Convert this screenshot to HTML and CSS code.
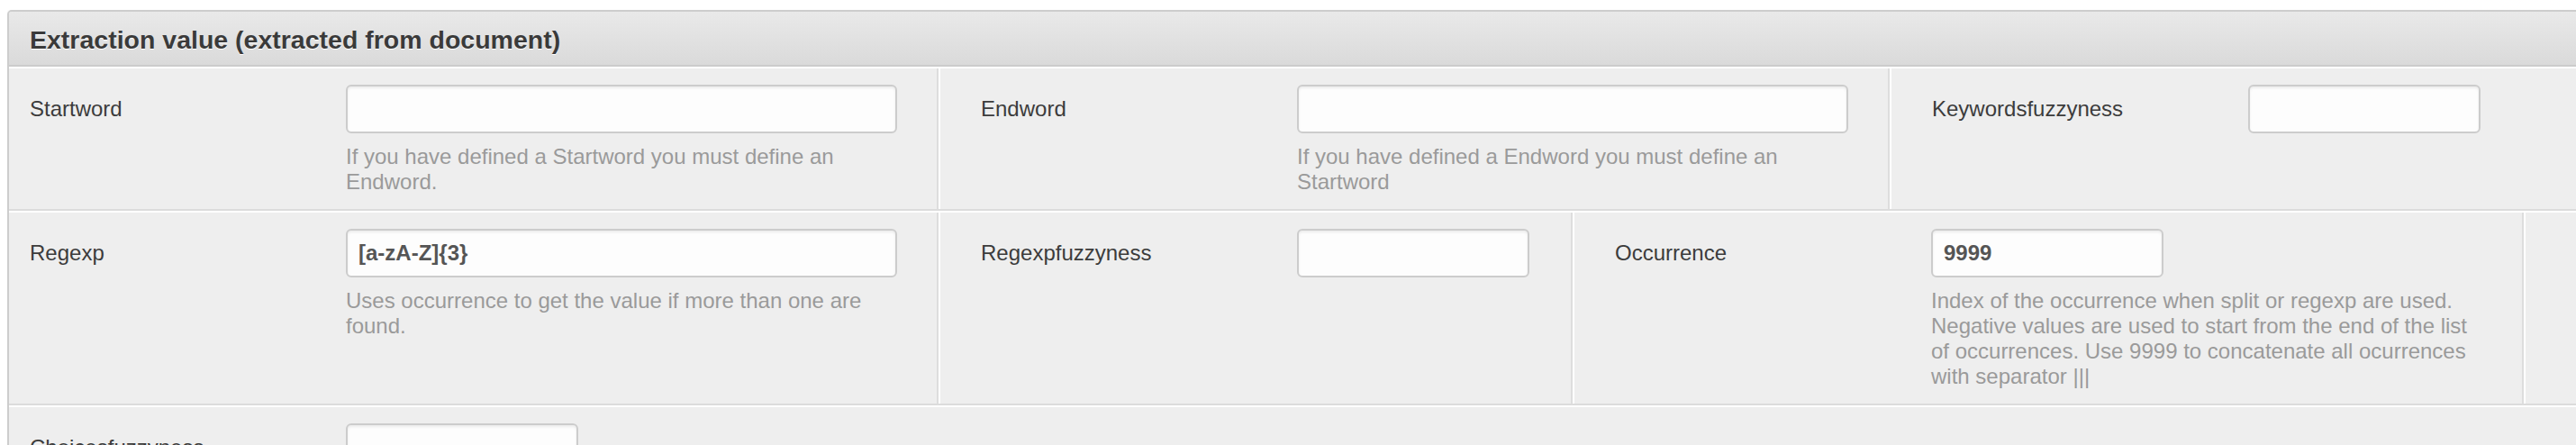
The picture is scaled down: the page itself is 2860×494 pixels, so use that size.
FILE: index.html
```html
<!DOCTYPE html>
<html lang="en">
<head>
    <meta charset="UTF-8">
    <title>Extraction value</title>
    <link rel="stylesheet" href="styles.css">
</head>
<body>
    <div class="panel">
        <div class="panel-heading">Extraction value (extracted from document)</div>

        <div class="panel-row">
            <div class="cell cell-first">
                <label class="field-label">Startword</label>
                <div class="field">
                    <input type="text" class="input-wide">
                    <p class="help">If you have defined a Startword you must define an Endword.</p>
                </div>
            </div>
            <div class="cell cell-3">
                <label class="field-label">Endword</label>
                <div class="field">
                    <input type="text" class="input-wide">
                    <p class="help">If you have defined a Endword you must define an Startword</p>
                </div>
            </div>
            <div class="cell cell-rest">
                <label class="field-label">Keywordsfuzzyness</label>
                <div class="field">
                    <input type="text" class="input-small">
                </div>
            </div>
        </div>

        <div class="panel-row">
            <div class="cell cell-first">
                <label class="field-label">Regexp</label>
                <div class="field">
                    <input type="text" class="input-wide" value="[a-zA-Z]{3}">
                    <p class="help">Uses occurrence to get the value if more than one are found.</p>
                </div>
            </div>
            <div class="cell cell-2">
                <label class="field-label">Regexpfuzzyness</label>
                <div class="field">
                    <input type="text" class="input-small">
                </div>
            </div>
            <div class="cell cell-3">
                <label class="field-label">Occurrence</label>
                <div class="field">
                    <input type="text" class="input-small" value="9999">
                    <p class="help">Index of the occurrence when split or regexp are used. Negative values are used to start from the end of the list of occurrences. Use 9999 to concatenate all ocurrences with separator |||</p>
                </div>
            </div>
            <div class="cell cell-rest"></div>
        </div>

        <div class="panel-row">
            <div class="cell cell-first">
                <label class="field-label">Choicesfuzzyness</label>
                <div class="field">
                    <input type="text" class="input-small">
                </div>
            </div>
        </div>
    </div>
</body>
</html>
```

FILE: styles.css
```css
html, body {
    overflow: hidden;
}
body {
    margin: 11px 0 0 8px;
    background-color: #fff;
    font-family: "Liberation Sans", Arial, sans-serif;
    color: #3c3c3c;
}
.panel {
    width: 4000px;
    border: 2px solid #cdcdcd;
    border-radius: 5px;
    background-color: #eeeeee;
    box-shadow: 0 0 6px rgba(0, 0, 0, 0.06);
}
.panel-heading {
    height: 59px;
    padding-left: 23px;
    line-height: 62px;
    font-size: 28.5px;
    font-weight: bold;
    color: #3a3a3a;
    text-shadow: 0 1px 0 #fff;
    background: linear-gradient(#e9e9e9, #dadada);
    border-bottom: 2px solid #cccccc;
    border-radius: 3px 3px 0 0;
}
.panel-row {
    display: flex;
    padding-top: 2px;
    box-shadow: inset 0 2px 0 #fff;
}
.panel-row + .panel-row {
    border-top: 2px solid #dcdcdc;
}
.cell {
    display: flex;
    flex-shrink: 0;
    box-sizing: border-box;
    padding: 18px 0 16px 47px;
    border-left: 2px solid #dddddd;
    box-shadow: inset 2px 0 0 #fff;
}
.cell-first {
    width: 1030px;
    padding-left: 23px;
    border-left: none;
    box-shadow: none;
}
.cell-2 {
    width: 704px;
}
.cell-3 {
    width: 1056px;
}
.cell-rest {
    flex: 1;
}
.field-label {
    width: 351px;
    flex-shrink: 0;
    padding-top: 10px;
    font-size: 24px;
    line-height: 34px;
}
.field {
    width: 612px;
}
input {
    display: block;
    box-sizing: border-box;
    height: 54px;
    margin: 0;
    padding: 0 12px;
    border: 2px solid #cccccc;
    border-radius: 6px;
    background-color: #fdfdfd;
    box-shadow: inset 0 2px 3px rgba(0, 0, 0, 0.07);
    font-family: "Liberation Sans", Arial, sans-serif;
    font-size: 24px;
    font-weight: bold;
    color: #555;
}
.input-wide {
    width: 612px;
}
.input-small {
    width: 258px;
}
.help {
    margin: 12px 0 0;
    font-size: 24px;
    line-height: 28px;
    color: #9a9a9a;
}
```
